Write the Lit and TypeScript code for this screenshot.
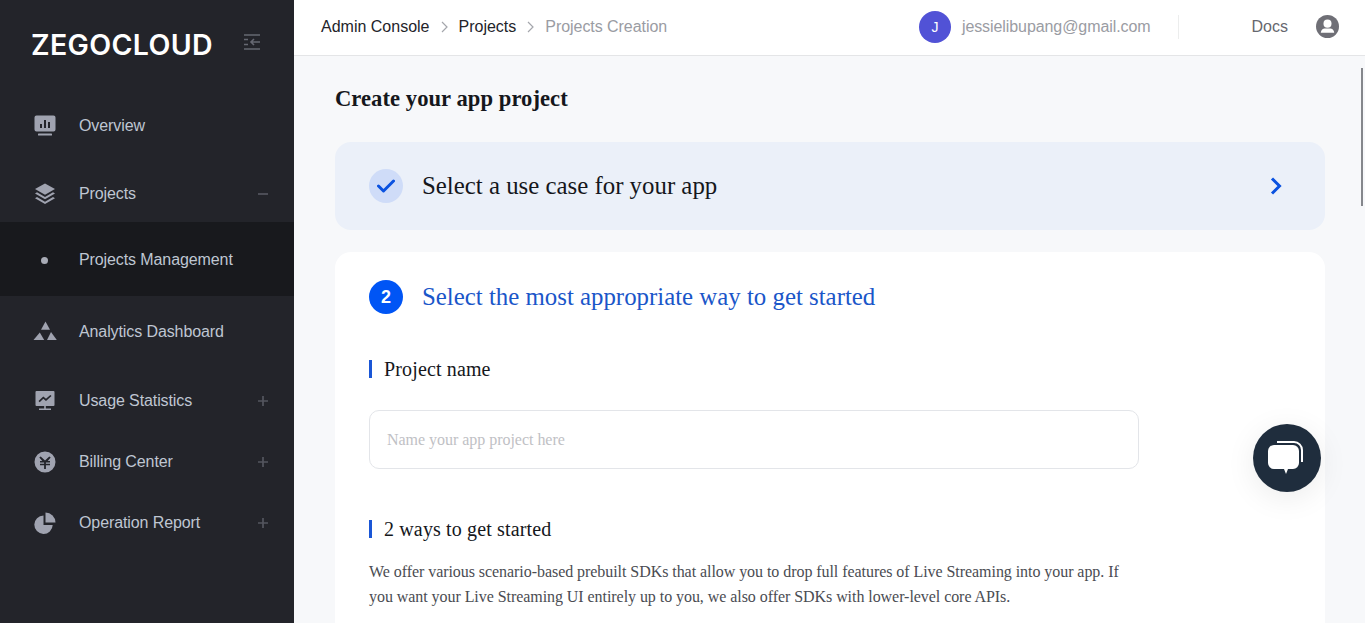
import {css, html, LitElement, svg} from "lit";
import {customElement} from "lit/decorators.js";

const icons = {
  overview: svg`<path fill-rule="evenodd" d="M2.500 .5h17a2 2 0 0 1 2 2v12a2 2 0 0 1-2 2h-17a2 2 0 0 1-2-2v-12a2 2 0 0 1 2-2zM6 9v4h2V9zm4-4v8h2V5zm4 2v6h2V7z"/><rect x="4" y="18.500" width="14" height="2" rx=".6"/>`,
  projects: svg`<path d="M11 .5l10 5.500-10 5.800L1 6z"/><path d="M1 10.400l2-1.100 8 4.600 8-4.600 2 1.100-10 5.800z"/><path d="M1 15.200l2-1.100 8 4.600 8-4.600 2 1.100-10 5.800z"/>`,
  analytics: svg`<path d="M11.500 .5l4.500 8.200H7z"/><path d="M5.800 11.500l4.400 7.500H-.5z"/><path d="M17 11l5.800 8H13z"/>`,
  usage: svg`<path fill-rule="evenodd" d="M2.500 1h17a1 1 0 0 1 1 1v13a1 1 0 0 1-1 1h-17a1 1 0 0 1-1-1V2a1 1 0 0 1 1-1zM4.500 11l1.200 1.200 3.600-3.400 2.700 2.300 5.500-5-1.200-1.200-4.300 3.900-2.700-2.300z"/><path d="M10.200 16h1.600v2.400h5.200V20H5v-1.600h5.200z"/>`,
  billing: svg`<path fill-rule="evenodd" d="M11 .5a10.500 10.500 0 1 1 0 21 10.500 10.500 0 0 1 0-21zM6.700 5.500L5.300 6.500 8.300 10H6v1.500h4.100v1.300H6v1.500h4.100V18h1.800v-3.700H16v-1.500h-4.100v-1.300H16V10h-2.300l3-3.500-1.400-1L11 9.500z"/>`,
  report: svg`<path d="M9.500 3.500a9.200 9.200 0 1 0 9.200 9.500H9.500z"/><path d="M11.500 .5a10 10 0 0 1 10 10h-10z"/>`,
};

const navIcon = (body: unknown) => html`<svg class="nav-icon" viewBox="0 0 22 22">${body}</svg>`;

@customElement("app-root")
export class AppRoot extends LitElement {
  static override styles = css`
    :host {
      display: flex;
      height: 100vh;
      overflow: hidden;
      font-family: "Liberation Sans", Arial, sans-serif;
      background: #f7f8fa;
    }
    .sidebar {
      flex: 0 0 294px;
      background: #23242a;
      color: #bfc6d2;
      font-size: 16px;
      letter-spacing: -0.1px;
    }
    .brand {
      height: 88px;
      padding: 0 33px 0 31px;
      display: flex;
      align-items: center;
      justify-content: space-between;
      box-sizing: border-box;
    }
    .logo {
      color: #fff;
      font-family: Inter, sans-serif;
      font-weight: 600;
      font-size: 28.500px;
      letter-spacing: 0.35px;
    }
    .collapse {
      width: 18px;
      height: 18px;
      margin-bottom: 4px;
      stroke: #666872;
      stroke-width: 1.6;
      fill: none;
    }
    .item {
      display: flex;
      align-items: center;
      height: 61px;
      padding: 0 26px 0 34px;
      box-sizing: border-box;
    }
    .overview { margin-top: 7px; height: 62px; }
    .projects { margin-top: 7px; height: 58px; padding-top: 2px; }
    .child { height: 74px; background: #18191d; padding-top: 2px; }
    .analytics { height: 70px; margin-bottom: 4px; padding-top: 2px; }
    .nav-icon {
      width: 22px;
      height: 22px;
      fill: #a0a3b0;
      flex: none;
      margin-right: 23px;
      overflow: visible;
    }
    .dot {
      width: 7px;
      height: 7px;
      border-radius: 50%;
      background: #a8abb6;
      margin: 0 31px 0 7px;
    }
    .label { flex: 1; }
    .minus, .plus {
      width: 10px;
      height: 10px;
      flex: none;
      stroke: #54565f;
      stroke-width: 1.7;
    }
    .right {
      flex: 1;
      min-width: 0;
      display: flex;
      flex-direction: column;
    }
    .topbar {
      flex: none;
      height: 56px;
      box-sizing: border-box;
      background: #fff;
      border-bottom: 1px solid #e4e5e7;
      display: flex;
      align-items: center;
      padding: 0 26px 2px 27px;
      font-size: 16px;
    }
    .crumbs { display: flex; align-items: center; flex: 1; color: #23242a; }
    .crumb-sep { width: 7px; height: 12px; margin: 0 11px; stroke: #a4a6ac; fill: none; stroke-width: 1.2; }
    .crumb-last { color: #9a9ca3; letter-spacing: -0.05px; }
    .avatar {
      width: 32px;
      height: 32px;
      border-radius: 50%;
      background: #5152d6;
      color: #fff;
      font-size: 14px;
      display: flex;
      align-items: center;
      justify-content: center;
      margin-right: 11px;
    }
    .email { color: #9a9ca3; letter-spacing: -0.08px; }
    .divider { width: 1px; height: 24px; background: #eceded; margin: 0 73px 0 27px; }
    .docs { color: #66686f; margin-right: 28px; }
    .user { width: 23px; height: 23px; }
    .main {
      flex: 1;
      min-height: 0;
      overflow: hidden;
      padding: 0 40px 0 41px;
      position: relative;
      font-family: "Liberation Serif", "Times New Roman", serif;
    }
    h1 {
      margin: 0;
      padding: 29px 0 29px;
      font-size: 22.600px;
      line-height: 28px;
      font-weight: 700;
      letter-spacing: 0.05px;
      color: #15171c;
    }
    .done {
      height: 88px;
      border-radius: 16px;
      background: #ebf0f9;
      display: flex;
      align-items: center;
      padding: 0 43px 0 34px;
      margin-bottom: 22px;
    }
    .step-title {
      font-size: 24.850px;
      font-weight: 400;
      margin: 0 0 0 19px;
      flex: 1;
      color: #15171c;
    }
    .check {
      width: 34px;
      height: 34px;
      border-radius: 50%;
      background: #cfdcf8;
      display: flex;
      align-items: center;
      justify-content: center;
    }
    .check svg { width: 18px; height: 14px; fill: none; stroke: #0a52e0; stroke-width: 3; stroke-linecap: round; stroke-linejoin: round; }
    .chev { width: 12px; height: 18px; fill: none; stroke: #0a52e0; stroke-width: 3; }
    .card {
      background: #fff;
      border-radius: 16px 16px 0 0;
      padding: 28px 34px 40px;
      height: 500px;
      box-sizing: border-box;
    }
    .step-head { display: flex; align-items: center; margin-bottom: 46px; }
    .num {
      width: 34px;
      height: 34px;
      border-radius: 50%;
      background: #0055f5;
      color: #fff;
      font-family: "Liberation Sans", sans-serif;
      font-weight: 700;
      font-size: 18px;
      display: flex;
      align-items: center;
      justify-content: center;
    }
    .step-head .step-title { color: #1a56c9; }
    .field {
      border-left: 3px solid #1a56d6;
      padding-left: 12px;
      height: 18px;
      display: flex;
      align-items: center;
      font-size: 20px;
      letter-spacing: 0.14px;
      color: #15171c;
    }
    .input {
      width: 770px;
      height: 59px;
      box-sizing: border-box;
      border: 1px solid #e3e5e9;
      border-radius: 10px;
      margin: 32px 0 51px;
      padding: 0 17px;
      display: flex;
      align-items: center;
      font-size: 16px;
      letter-spacing: -0.03px;
      color: #bfc1c5;
    }
    .desc {
      width: 770px;
      margin: 21px 0 0;
      font-size: 16px;
      line-height: 25px;
      letter-spacing: -0.057px;
      color: #4a4c52;
    }
    .scroll {
      position: absolute;
      right: 2px;
      top: 12px;
      width: 2px;
      height: 138px;
      background: #85878c;
    }
    .chat {
      position: absolute;
      left: 959px;
      top: 368px;
      width: 68px;
      height: 68px;
      border-radius: 50%;
      background: #1f2d3d;
      box-shadow: 0 6px 30px rgba(0, 0, 0, 0.08);
      display: flex;
      align-items: center;
      justify-content: center;
    }
    .chat svg { width: 36px; height: 36px; overflow: visible; }
  `;

  override render() {
    const plus = html`<svg class="plus" viewBox="0 0 10 10"><path d="M0 5h10M5 0v10" /></svg>`;
    const chevron = html`<svg class="crumb-sep" viewBox="0 0 7 12"><path d="M1 1l5 5-5 5" /></svg>`;
    return html`
      <nav class="sidebar">
        <div class="brand">
          <span class="logo">ZEGOCLOUD</span>
          <svg class="collapse" viewBox="0 0 18 18">
            <path d="M1 2h16M1 16h16M1 6.500h4M1 11.500h4M8 9h9M11 6L8 9l3 3" />
          </svg>
        </div>
        <div class="item overview">${navIcon(icons.overview)}<span class="label">Overview</span></div>
        <div class="item projects">
          ${navIcon(icons.projects)}<span class="label">Projects</span>
          <svg class="minus" viewBox="0 0 10 10"><path d="M0 5h10" /></svg>
        </div>
        <div class="item child"><span class="dot"></span><span class="label">Projects Management</span></div>
        <div class="item analytics">${navIcon(icons.analytics)}<span class="label">Analytics Dashboard</span></div>
        <div class="item">${navIcon(icons.usage)}<span class="label">Usage Statistics</span>${plus}</div>
        <div class="item">${navIcon(icons.billing)}<span class="label">Billing Center</span>${plus}</div>
        <div class="item">${navIcon(icons.report)}<span class="label">Operation Report</span>${plus}</div>
      </nav>
      <div class="right">
        <header class="topbar">
          <div class="crumbs">
            <span>Admin Console</span>
            ${chevron}
            <span>Projects</span>
            ${chevron}
            <span class="crumb-last">Projects Creation</span>
          </div>
          <span class="avatar">J</span>
          <span class="email">jessielibupang@gmail.com</span>
          <span class="divider"></span>
          <span class="docs">Docs</span>
          <svg class="user" viewBox="0 0 24 24">
            <circle cx="12" cy="12" r="12" fill="#6f6f76" />
            <circle cx="12" cy="9" r="4.200" fill="#fff" />
            <path d="M5 18.500c0-3 2.500-4.500 4-4.500h6c1.500 0 4 1.500 4 4.500z" fill="#fff" />
          </svg>
        </header>
        <main class="main">
          <h1>Create your app project</h1>
          <section class="done">
            <span class="check"><svg viewBox="0 0 18 14"><path d="M1.500 7l5 5L16.500 2" /></svg></span>
            <h2 class="step-title">Select a use case for your app</h2>
            <svg class="chev" viewBox="0 0 12 18"><path d="M2 1.500l7.500 7.500L2 16.500" /></svg>
          </section>
          <section class="card">
            <div class="step-head">
              <span class="num">2</span>
              <h2 class="step-title">Select the most appropriate way to get started</h2>
            </div>
            <div class="field">Project name</div>
            <div class="input">Name your app project here</div>
            <div class="field">2 ways to get started</div>
            <p class="desc">We offer various scenario-based prebuilt SDKs that allow you to drop full features of Live Streaming into your app. If you want your Live Streaming UI entirely up to you, we also offer SDKs with lower-level core APIs.</p>
          </section>
          <div class="scroll"></div>
          <div class="chat">
            <svg viewBox="0 0 36 36">
              <path d="M8 2h17a8 8 0 0 1 8 8v12" fill="none" stroke="#fff" stroke-width="2" />
              <path d="M5 5h19a6 6 0 0 1 6 6v12a6 6 0 0 1-6 6h-5l-2 5-2-5H5a6 6 0 0 1-6-6V11a6 6 0 0 1 6-6z" fill="#fff" />
            </svg>
          </div>
        </main>
      </div>
    `;
  }
}
